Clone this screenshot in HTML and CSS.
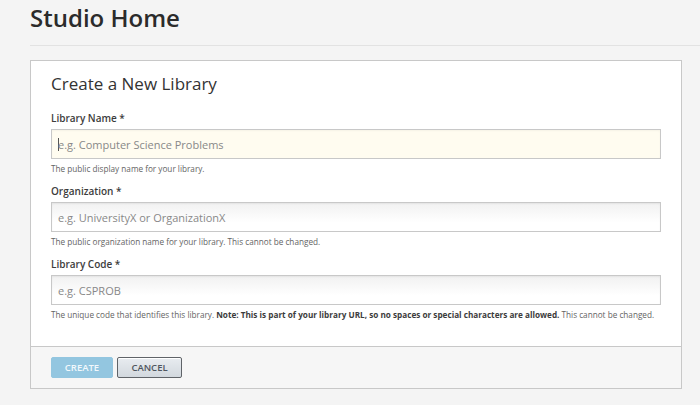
FILE: index.html
```html
<!DOCTYPE html>
<html lang="en">
<head>
<meta charset="utf-8">
<title>Studio Home</title>
<link rel="stylesheet" href="styles.css">
</head>
<body>
<header class="page-header">
  <h1 class="page-title">Studio Home</h1>
</header>
<main class="wrapper">
  <form class="card">
    <div class="card-body">
      <h2 class="card-title">Create a New Library</h2>
      <div class="field">
        <label class="field-label" for="lib-name">Library Name *</label>
        <div class="input focused" id="lib-name"><span class="caret"></span><span class="placeholder">e.g. Computer Science Problems</span></div>
        <p class="field-help">The public display name for your library.</p>
      </div>
      <div class="field">
        <label class="field-label" for="lib-org">Organization *</label>
        <div class="input" id="lib-org"><span class="placeholder">e.g. UniversityX or OrganizationX</span></div>
        <p class="field-help">The public organization name for your library. This cannot be changed.</p>
      </div>
      <div class="field">
        <label class="field-label" for="lib-code">Library Code *</label>
        <div class="input" id="lib-code"><span class="placeholder">e.g. CSPROB</span></div>
        <p class="field-help">The unique code that identifies this library. <strong>Note: This is part of your library URL, so no spaces or special characters are allowed.</strong> This cannot be changed.</p>
      </div>
    </div>
    <div class="card-actions">
      <button type="button" class="btn btn-create">Create</button>
      <button type="button" class="btn btn-cancel">Cancel</button>
    </div>
  </form>
</main>
</body>
</html>
```
FILE: styles.css
```css
html, body {
  margin: 0;
  padding: 0;
}
body {
  background: #f4f4f4;
  font-family: "Open Sans", "Liberation Sans", sans-serif;
  color: #3c3c3c;
  width: 700px;
  height: 405px;
  overflow: hidden;
}
.page-header {
  margin-left: 30px;
  height: 45px;
  border-bottom: 1px solid #e2e2e2;
}
.page-title {
  margin: 0;
  padding-top: 1px;
  font-size: 24px;
  line-height: 34px;
  font-weight: 600;
  color: #2b2b2b;
}
.wrapper {
  padding: 14px 18px 0 30px;
}
.card {
  background: #fff;
  border: 1px solid #c8c8c8;
  margin: 0;
}
.card-body {
  padding: 11px 20px 25px 20px;
}
.card-title {
  margin: 0 0 15px 0;
  font-size: 17px;
  line-height: 24px;
  font-weight: 400;
  color: #333;
}
.field {
  margin-bottom: 9px;
}
.field:last-child {
  margin-bottom: 0;
}
.field-label {
  display: block;
  font-size: 10px;
  line-height: 14px;
  font-weight: 600;
  color: #3c3c3c;
  margin-bottom: 4px;
}
.input {
  box-sizing: border-box;
  height: 30px;
  border: 1px solid #c8c8c8;
  background: linear-gradient(#f1f1f1, #ffffff 70%);
  box-shadow: inset 0 1px 2px rgba(0,0,0,0.06);
  padding: 0 6px;
  display: flex;
  align-items: center;
  font-size: 11px;
}
.input.focused {
  background: #fffcf0;
  box-shadow: inset 0 1px 2px rgba(0,0,0,0.04);
}
.placeholder {
  color: #888;
}
.caret {
  display: inline-block;
  width: 1px;
  height: 13px;
  background: #555;
  margin-right: -1px;
}
.field-help {
  margin: 4px 0 0 0;
  font-size: 8.2px;
  line-height: 12px;
  color: #646464;
}
.field-help strong {
  font-weight: 700;
  color: #3c3c3c;
}
.card-actions {
  border-top: 1px solid #c8c8c8;
  background: #f6f6f6;
  padding: 10px 20px;
  display: flex;
  gap: 4px;
}
.btn {
  box-sizing: border-box;
  height: 21px;
  font-family: "Open Sans", "Liberation Sans", sans-serif;
  font-size: 9.5px;
  font-weight: 600;
  text-transform: uppercase;
  border-radius: 2px;
  padding: 0;
  cursor: pointer;
}
.btn-create {
  width: 62px;
  background: #93c6e0;
  border: 1px solid #93c6e0;
  color: #f2f8fc;
}
.btn-cancel {
  width: 65px;
  background: linear-gradient(#e8ecf0, #d2d8de);
  border: 1px solid #5f6368;
  box-shadow: inset 0 1px 0 #fff;
  color: #4f5660;
}
```
